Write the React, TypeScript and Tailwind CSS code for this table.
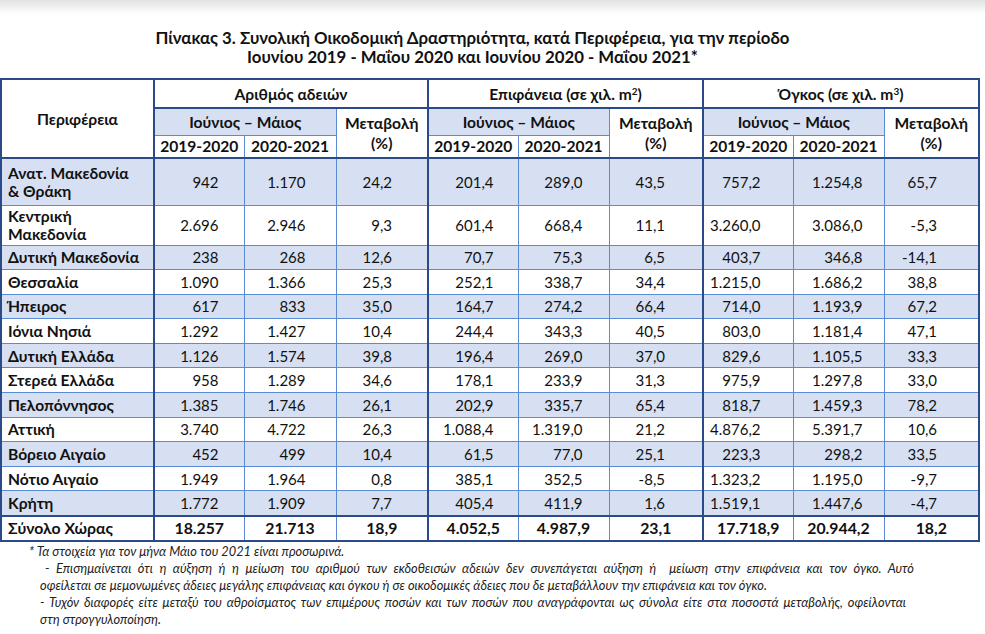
import React from "react";

const rows: string[][] = [
  ["Ανατ. Μακεδονία|& Θράκη", "942", "1.170", "24,2", "201,4", "289,0", "43,5", "757,2", "1.254,8", "65,7"],
  ["Κεντρική|Μακεδονία", "2.696", "2.946", "9,3", "601,4", "668,4", "11,1", "3.260,0", "3.086,0", "-5,3"],
  ["Δυτική Μακεδονία", "238", "268", "12,6", "70,7", "75,3", "6,5", "403,7", "346,8", "-14,1"],
  ["Θεσσαλία", "1.090", "1.366", "25,3", "252,1", "338,7", "34,4", "1.215,0", "1.686,2", "38,8"],
  ["Ήπειρος", "617", "833", "35,0", "164,7", "274,2", "66,4", "714,0", "1.193,9", "67,2"],
  ["Ιόνια Νησιά", "1.292", "1.427", "10,4", "244,4", "343,3", "40,5", "803,0", "1.181,4", "47,1"],
  ["Δυτική Ελλάδα", "1.126", "1.574", "39,8", "196,4", "269,0", "37,0", "829,6", "1.105,5", "33,3"],
  ["Στερεά Ελλάδα", "958", "1.289", "34,6", "178,1", "233,9", "31,3", "975,9", "1.297,8", "33,0"],
  ["Πελοπόννησος", "1.385", "1.746", "26,1", "202,9", "335,7", "65,4", "818,7", "1.459,3", "78,2"],
  ["Αττική", "3.740", "4.722", "26,3", "1.088,4", "1.319,0", "21,2", "4.876,2", "5.391,7", "10,6"],
  ["Βόρειο Αιγαίο", "452", "499", "10,4", "61,5", "77,0", "25,1", "223,3", "298,2", "33,5"],
  ["Νότιο Αιγαίο", "1.949", "1.964", "0,8", "385,1", "352,5", "-8,5", "1.323,2", "1.195,0", "-9,7"],
  ["Κρήτη", "1.772", "1.909", "7,7", "405,4", "411,9", "1,6", "1.519,1", "1.447,6", "-4,7"],
];
const total = ["Σύνολο Χώρας", "18.257", "21.713", "18,9", "4.052,5", "4.987,9", "23,1", "17.718,9", "20.944,2", "18,2"];

const padR = [
  "",
  "pr-[25px]",
  "pr-[30px]",
  "pr-[35px]",
  "pr-[24px]",
  "pr-[26px]",
  "pr-[37px]",
  "pr-[32px]",
  "pr-[21px]",
  "pr-[41px]",
];

const widths = [153, 90, 92, 92, 90, 91, 94, 90, 91, 95];

const thin = "border border-[#5b8bd3]";
const thickL = "border-l-2 border-l-[#2a4a88]";
const thickT = "border-t-2 border-t-[#2a4a88]";

function rowHeight(i: number) {
  if (i === 0) return "h-[47px]";
  if (i === 1) return "h-[40px]";
  return "h-[24.6px]";
}

export default function App() {
  return (
    <div className="w-[985px] h-[634px] bg-white overflow-hidden text-[#111] font-['Lato','Liberation_Sans',sans-serif]">
      <div className="h-[14px] bg-gradient-to-b from-[#e2e2e2] to-white" />
      <div className="w-[945px] pt-[14px] text-center font-bold text-[16.8px] leading-[19px]">
        <div>Πίνακας 3. Συνολική Οικοδομική Δραστηριότητα, κατά Περιφέρεια, για την περίοδο</div>
        <div>Ιουνίου 2019 - Μαΐου 2020 και Ιουνίου 2020 - Μαΐου 2021*</div>
      </div>
      <table className="mt-[12px] table-fixed border-collapse border-2 border-[#2a4a88] w-[978px] text-[15px] leading-[18px]">
        <colgroup>
          {widths.map((w, i) => (
            <col key={i} style={{ width: w }} />
          ))}
        </colgroup>
        <thead className="font-bold text-[15.6px]">
          <tr className="h-[29px]">
            <td rowSpan={3} className={`${thin} text-center align-middle bg-white`}>Περιφέρεια</td>
            <td colSpan={3} className={`${thin} ${thickL} text-center`}>Αριθμός αδειών</td>
            <td colSpan={3} className={`${thin} ${thickL} text-center`}>
              Επιφάνεια (σε χιλ. m<sup className="text-[10px]">2</sup>)
            </td>
            <td colSpan={3} className={`${thin} ${thickL} text-center`}>
              Όγκος (σε χιλ. m<sup className="text-[10px]">3</sup>)
            </td>
          </tr>
          <tr className="h-[27px]">
            <td colSpan={2} className={`${thin} ${thickL} ${thickT} text-center bg-[#d6e0f2]`}>Ιούνιος – Μάιος</td>
            <td rowSpan={2} className={`${thin} ${thickT} text-center leading-[20px]`}>Μεταβολή<br />(%)</td>
            <td colSpan={2} className={`${thin} ${thickL} ${thickT} text-center bg-[#d6e0f2]`}>Ιούνιος – Μάιος</td>
            <td rowSpan={2} className={`${thin} ${thickT} text-center leading-[20px]`}>Μεταβολή<br />(%)</td>
            <td colSpan={2} className={`${thin} ${thickL} ${thickT} text-center bg-[#d6e0f2]`}>Ιούνιος – Μάιος</td>
            <td rowSpan={2} className={`${thin} ${thickT} text-center leading-[20px]`}>Μεταβολή<br />(%)</td>
          </tr>
          <tr className="h-[23px]">
            <td className={`${thin} ${thickL} text-center`}>2019-2020</td>
            <td className={`${thin} text-center`}>2020-2021</td>
            <td className={`${thin} ${thickL} text-center`}>2019-2020</td>
            <td className={`${thin} text-center`}>2020-2021</td>
            <td className={`${thin} ${thickL} text-center`}>2019-2020</td>
            <td className={`${thin} text-center`}>2020-2021</td>
          </tr>
        </thead>
        <tbody>
          {rows.map((r, i) => (
            <tr key={i} className={`${rowHeight(i)} ${i % 2 === 0 ? "bg-[#d6e0f2]" : "bg-white"}`}>
              {r.map((c, ci) =>
                ci === 0 ? (
                  <td
                    key={ci}
                    className={`${thin} ${i === 0 ? thickT : ""} pl-[6px] font-bold text-[15.6px] text-left align-middle`}
                  >
                    {c.split("|").map((p, pi) => (
                      <div key={pi}>{p}</div>
                    ))}
                  </td>
                ) : (
                  <td
                    key={ci}
                    className={`${thin} ${ci === 1 || ci === 4 || ci === 7 ? thickL : ""} ${i === 0 ? thickT : ""} ${padR[ci]} text-right align-middle`}
                  >
                    {c}
                  </td>
                )
              )}
            </tr>
          ))}
          <tr className="h-[25px] bg-white font-bold text-[15.8px]">
            {total.map((c, ci) => (
              <td
                key={ci}
                className={`${thin} ${thickT} ${ci === 1 || ci === 4 || ci === 7 ? thickL : ""} ${ci === 0 ? "pl-[6px] text-left" : "text-center"} align-middle`}
              >
                {c}
              </td>
            ))}
          </tr>
        </tbody>
      </table>
      <div className="pl-[40px] pt-[1px] w-[914px] italic text-[12.8px] leading-[17px] text-[#222]">
        <div className="-ml-[11px]">* Τα στοιχεία για τον μήνα Μάιο του 2021 είναι προσωρινά.</div>
        <div className="pl-[5px] text-justify [text-align-last:justify]">
          - Επισημαίνεται ότι η αύξηση ή η μείωση του αριθμού των εκδοθεισών αδειών δεν συνεπάγεται αύξηση ή&nbsp; μείωση στην επιφάνεια και τον όγκο. Αυτό
        </div>
        <div>οφείλεται σε μεμονωμένες άδειες μεγάλης επιφάνειας και όγκου ή σε οικοδομικές άδειες που δε μεταβάλλουν την επιφάνεια και τον όγκο.</div>
        <div className="w-[866px] text-justify [text-align-last:justify]">
          - Τυχόν διαφορές είτε μεταξύ του αθροίσματος των επιμέρους ποσών και των ποσών που αναγράφονται ως σύνολα είτε στα ποσοστά μεταβολής, οφείλονται
        </div>
        <div>στη στρογγυλοποίηση.</div>
      </div>
    </div>
  );
}
